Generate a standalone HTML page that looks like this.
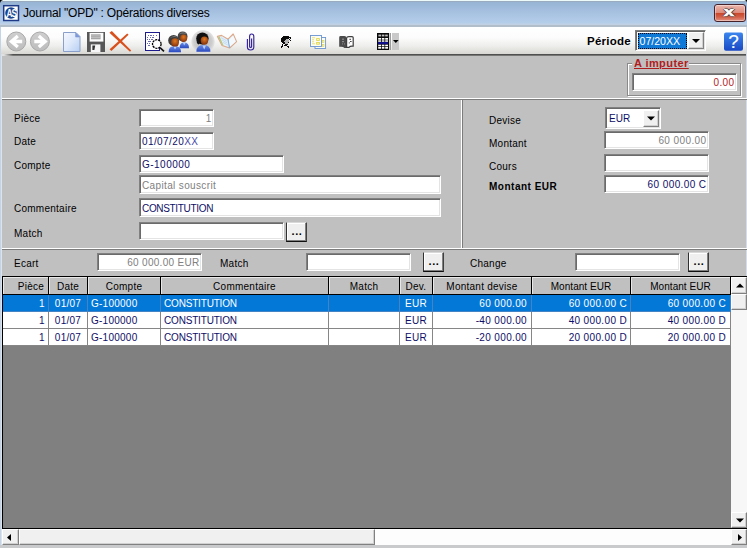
<!DOCTYPE html>
<html lang="fr">
<head>
<meta charset="utf-8">
<title>Journal "OPD" : Opérations diverses</title>
<style>
*{box-sizing:border-box;margin:0;padding:0}
html,body{width:747px;height:548px;overflow:hidden;background:#c0c0c0}
body{position:relative;font-family:"Liberation Sans",Arial,sans-serif;font-size:11px;color:#000}
.abs{position:absolute}
#titlebar{left:0;top:0;width:747px;height:27px;background:linear-gradient(#ecfafa 0,#ecfafa 1px,#9aabc0 1px,#9aabc0 2px,#97b4d4 2px,#a6c0e0 12px,#b4ceea 23px,#c2d0e3 24px,#c2d0e3 25px,#b2bec9 25px,#b2bec9 27px)}
#title{left:23px;top:6px;font-size:12px;line-height:15px;color:#000;white-space:nowrap;letter-spacing:-0.21px}
#toolbar{left:1px;top:27px;width:745px;height:27px;background:linear-gradient(#fff 0,#fcfcfc 40%,#eeeeec 70%,#d8d7d3 100%)}
#tbline{left:1px;top:54px;width:745px;height:2px;background:linear-gradient(to right,#e0e0e0 0,#e0e0e0 3px,rgba(224,224,224,0) 12px),linear-gradient(#505050 0,#505050 1px,#777775 1px,#777775 2px)}
#frameL{left:0;top:27px;width:2px;height:521px;background:linear-gradient(to right,#c4d3e6 0,#c4d3e6 1px,#dbe4ee 1px,#dbe4ee 2px)}
#frameR{left:746px;top:27px;width:1px;height:249px;background:#d6dde6}
#frameB{left:0;top:545px;width:747px;height:3px;background:#c9cacc}
.lbl{position:absolute;font-size:10px;letter-spacing:.25px;line-height:13px;white-space:nowrap;color:#000}
.inp{position:absolute;background:#fff;border:1px solid;border-color:#808080 #fff #fff #808080;box-shadow:inset 1px 1px 0 #6a6a6a, inset -1px -1px 0 #e4e4e4;font-size:10px;letter-spacing:.25px;line-height:13px;padding:2px 3px 0 2px;white-space:nowrap;overflow:hidden;color:#0e0e66;height:18px}
.inp.r{text-align:right;padding-right:1.5px}
.n{letter-spacing:.4px}
.inp.dis{color:#808080}
.btn{position:absolute;background:#efefef;border:1px solid;border-color:#d8d8d8 #404040 #101010 #303030;box-shadow:inset -1px -1px 0 #808080, inset 1px 1px 0 #fff;font-size:11px;font-weight:bold;letter-spacing:.6px;text-align:center;line-height:16px;padding-left:1px}
.hl{position:absolute;height:2px;border-top:1px solid #fff;border-bottom:1px solid #7c7c7c}
.vl{position:absolute;width:2px;border-left:1px solid #fff;border-right:1px solid #7c7c7c}
#grid{left:2px;top:276px;width:745px;height:253px;background:#808080;border:1px solid #000;border-right:none}
.hd{position:absolute;top:0;height:18px;background:#c0c0c0;border-right:1px solid #000;border-bottom:1px solid #000;box-shadow:inset 1px 1px 0 #e8e8e8;text-align:center;font-size:10px;letter-spacing:.25px;line-height:17px;white-space:nowrap;overflow:hidden;padding:1px 0 0 0}
.hd.r{text-align:right;padding-right:4px}
.row{position:absolute;left:0;width:728px;height:17px;background:#fff}
.row.sel{background:#0478d7}
.c{position:absolute;top:0;height:17px;border-right:1px solid #868686;border-bottom:1px solid #868686;font-size:10px;letter-spacing:.25px;line-height:16px;color:#0e0e66;white-space:nowrap;overflow:hidden;padding:1px 3px 0 3px}
.sel .c{color:#fff;border-color:#4584c4}
.c.r{text-align:right;padding-right:4px;letter-spacing:.35px}
.c.m{text-align:center}
.sbtrack{background:#f7f7f7}
.sbb{position:absolute;background:#f0f0f0;border:1px solid;border-color:#fff #808080 #808080 #fff;box-shadow:inset -1px -1px 0 #d0d0d0}
.cap{font-size:10px;letter-spacing:-0.33px}
.c .cap{letter-spacing:-0.18px}
</style>
</head>
<body>
<div id="titlebar" class="abs"></div>
<div id="frameL" class="abs"></div>
<div id="frameR" class="abs"></div>
<div id="frameB" class="abs"></div>
<div id="title" class="abs">Journal "OPD" : Opérations diverses</div>
<div id="toolbar" class="abs"></div>
<div id="tbline" class="abs"></div>
<svg id="tbicons" class="abs" style="left:0;top:27px" width="747" height="28" viewBox="0 27 747 28">
<defs>
<linearGradient id="gdoc" x1="0" y1="0" x2="1" y2="1"><stop offset="0" stop-color="#f6f9ff"/><stop offset="0.5" stop-color="#dde8fa"/><stop offset="1" stop-color="#b6cef2"/></linearGradient>
<radialGradient id="ghalo"><stop offset="0" stop-color="#b4b4b4"/><stop offset="0.75" stop-color="#cecece"/><stop offset="0.92" stop-color="#dcdcdc" stop-opacity="0.8"/><stop offset="1" stop-color="#e8e8e8" stop-opacity="0"/></radialGradient>
<radialGradient id="gface" cx="0.5" cy="0.35" r="0.7"><stop offset="0" stop-color="#e07a20"/><stop offset="1" stop-color="#7a2a0c"/></radialGradient>
<linearGradient id="gbody" x1="0" y1="0" x2="0" y2="1"><stop offset="0" stop-color="#6a8ee8"/><stop offset="1" stop-color="#2a48c0"/></linearGradient>
<linearGradient id="ghelp" x1="0" y1="0" x2="0" y2="1"><stop offset="0" stop-color="#3b86ee"/><stop offset="1" stop-color="#1848c4"/></linearGradient>
<linearGradient id="gcirc" x1="0" y1="0" x2="0" y2="1"><stop offset="0" stop-color="#cfcfcf"/><stop offset="1" stop-color="#bcbcbc"/></linearGradient>
</defs>
<!-- back / forward -->
<circle cx="16.3" cy="41.5" r="9.5" fill="url(#gcirc)" stroke="#a9a9a9" stroke-width="1"/>
<path d="M17.8 35.9 L11.4 41.5 L17.8 47.1 M12.5 41.5 H22.2" fill="none" stroke="#fff" stroke-width="3.3" stroke-linejoin="miter"/>
<circle cx="39.9" cy="41.5" r="9.5" fill="url(#gcirc)" stroke="#a9a9a9" stroke-width="1"/>
<path d="M38.8 35.9 L45.2 41.5 L38.8 47.1 M44 41.5 H34.3" fill="none" stroke="#fff" stroke-width="3.3" stroke-linejoin="miter"/>
<!-- new doc -->
<path d="M63.5 32.5 H76 L80 36.5 V51.5 H63.5 Z" fill="url(#gdoc)" stroke="#8aa0ca" stroke-width="1"/>
<path d="M75.6 32.8 V37 H79.8 Z" fill="#7c9ade" stroke="#7d96cc" stroke-width="0.6"/>
<!-- floppy -->
<rect x="87" y="32" width="18" height="20" fill="#575757"/>
<rect x="89.6" y="32.8" width="13.8" height="8.8" fill="#fcfcfc"/>
<rect x="91" y="34.3" width="9.6" height="5" fill="#a4a4a4"/>
<rect x="91" y="35.6" width="9.6" height="0.6" fill="#cfcfcf"/><rect x="91" y="37.4" width="9.6" height="0.6" fill="#cfcfcf"/>
<rect x="90.8" y="44.4" width="9.6" height="7.6" fill="#f6f6f6"/><path d="M92.4 45.6 H95.2 L94.4 50 H92.4 Z" fill="#333"/>
<!-- red X -->
<path d="M109.4 32.8 L111.8 31 L131.2 50.6 L130 51.8 Z" fill="#d8501c"/>
<path d="M109.6 49.2 L127.2 33.6 L128.6 34.8 L111.4 51 Z" fill="#d8501c"/>
<!-- preview -->
<rect x="145.5" y="32.5" width="14" height="18" fill="#fff" stroke="#1c1a8c" stroke-width="1"/>
<g fill="#6a6ab0"><rect x="148" y="35" width="1" height="1"/><rect x="150" y="35" width="2" height="1"/><rect x="153" y="35" width="1" height="1"/><rect x="156" y="35" width="1" height="1"/>
<rect x="147" y="37" width="1" height="1"/><rect x="150" y="37" width="1" height="1"/><rect x="152" y="37" width="2" height="1"/>
<rect x="147" y="39" width="1" height="1"/><rect x="149" y="39" width="1" height="1"/><rect x="151" y="39" width="2" height="1"/>
<rect x="148" y="41" width="3" height="1"/><rect x="147" y="43" width="1" height="1"/><rect x="149" y="43" width="1" height="1"/><rect x="148" y="45" width="2" height="1"/></g>
<circle cx="156.8" cy="44" r="4.3" fill="#fff" stroke="#000" stroke-width="1.3" stroke-dasharray="2.2 0.8"/>
<path d="M160 47.6 L164 51.4" stroke="#111" stroke-width="1.6"/>
<!-- two people -->
<g>
<path d="M179.6 48.2 Q179.4 42.4 184 42.4 Q189.2 42.4 189 48.2 Z" fill="url(#gbody)"/>
<path d="M183 42.8 L184.2 45.4 L185.6 42.8 Z" fill="#b8d0f8"/>
<ellipse cx="182.6" cy="36.4" rx="4.9" ry="5" fill="#444"/>
<path d="M178.6 34.6 Q182.6 30.4 187 34 Q183 32.6 178.6 34.6 Z" fill="#777"/>
<ellipse cx="183.6" cy="38.2" rx="3.5" ry="3.8" fill="url(#gface)"/>
<path d="M168.6 52.2 Q168.4 46 174.8 46 Q181.2 46 181 52.2 Z" fill="url(#gbody)"/>
<path d="M173.4 46.4 L175 49.6 L176.8 46.4 Z" fill="#b8d0f8"/>
<ellipse cx="173.6" cy="40.4" rx="5.4" ry="5.5" fill="#3c3c3c"/>
<path d="M169.4 38.4 Q173.6 33.8 178.4 37.6 Q174 36.2 169.4 38.4 Z" fill="#777"/>
<ellipse cx="175" cy="42.4" rx="3.9" ry="4.2" fill="url(#gface)"/>
</g>
<!-- person with halo -->
<circle cx="203" cy="41.8" r="12.2" fill="url(#ghalo)"/>
<path d="M196.4 51.8 Q196.2 45 203.4 45 Q210.6 45 210.4 51.8 Z" fill="url(#gbody)"/>
<path d="M202.4 45.6 L204.2 49.4 L206 45.6 Z" fill="#b8d0f8"/>
<ellipse cx="202.4" cy="38.6" rx="6.2" ry="6" fill="#101010"/>
<path d="M197 39 Q196 43.6 198.6 44.6 L201 42 Z" fill="#101010"/>
<ellipse cx="204.4" cy="40.6" rx="3.7" ry="4.2" fill="url(#gface)"/>
<!-- open book -->
<path d="M217.4 36.4 L221.6 35.4 L228 39.2 L233.2 34 L236.6 41.6 L229.6 48 L222 45.6 Z" fill="#e4f0fa" stroke="#dca888" stroke-width="1.1" stroke-linejoin="round"/>
<path d="M228 39.2 L229.6 48" stroke="#86b4dc" stroke-width="1.3"/>
<path d="M229 40 L233.2 35.6 L235.6 41.4 L230.2 46.4 Z" fill="#f4f9fe"/>
<path d="M218 36.8 L219.6 36.4 L223.6 45.6 L222.2 45.2 Z" fill="#b8c880"/>
<path d="M221 37.6 L226.6 40.8 M222 40 L227.2 43 M223 42.4 L227.8 45" stroke="#b8d4ee" stroke-width="0.7"/>
<!-- paperclip -->
<path d="M247.4 39 V47 Q247.4 50 250.6 50 Q253.8 50 253.8 47 V36.6 Q253.8 34 251.6 34 Q249.6 34 249.6 36.6 V46.4 Q249.6 47.4 250.6 47.4 Q251.6 47.4 251.6 46.4 V38.6" fill="none" stroke="#35249a" stroke-width="1.15"/>
<!-- head -->
<g shape-rendering="crispEdges"><rect x="283" y="36" width="6" height="1" fill="#0a0a0a"/><rect x="282" y="37" width="9" height="1" fill="#0a0a0a"/><rect x="281" y="38" width="8" height="1" fill="#0a0a0a"/><rect x="290" y="38" width="1" height="1" fill="#0a0a0a"/><rect x="281" y="39" width="5" height="1" fill="#0a0a0a"/><rect x="286" y="39" width="2" height="1" fill="#b4b4b4"/><rect x="288" y="39" width="1" height="1" fill="#f4f4f4"/><rect x="289" y="39" width="1" height="1" fill="#0a0a0a"/><rect x="281" y="40" width="4" height="1" fill="#0a0a0a"/><rect x="285" y="40" width="4" height="1" fill="#b4b4b4"/><rect x="290" y="40" width="1" height="1" fill="#0a0a0a"/><rect x="281" y="41" width="3" height="1" fill="#0a0a0a"/><rect x="284" y="41" width="5" height="1" fill="#b4b4b4"/><rect x="289" y="41" width="1" height="1" fill="#f4f4f4"/><rect x="282" y="42" width="3" height="1" fill="#0a0a0a"/><rect x="285" y="42" width="3" height="1" fill="#b4b4b4"/><rect x="288" y="42" width="1" height="1" fill="#0a0a0a"/><rect x="283" y="43" width="2" height="1" fill="#0a0a0a"/><rect x="285" y="43" width="3" height="1" fill="#b4b4b4"/><rect x="288" y="43" width="1" height="1" fill="#f4f4f4"/><rect x="282" y="44" width="1" height="1" fill="#0a0a0a"/><rect x="284" y="44" width="1" height="1" fill="#f4f4f4"/><rect x="285" y="44" width="3" height="1" fill="#0a0a0a"/><rect x="282" y="45" width="1" height="1" fill="#0a0a0a"/><rect x="284" y="45" width="3" height="1" fill="#0a0a0a"/><rect x="287" y="45" width="1" height="1" fill="#f4f4f4"/><rect x="281" y="46" width="2" height="1" fill="#0a0a0a"/><rect x="287" y="46" width="2" height="1" fill="#0a0a0a"/><rect x="281" y="47" width="1" height="1" fill="#0a0a0a"/><rect x="288" y="47" width="1" height="1" fill="#0a0a0a"/></g>
<!-- docs -->
<rect x="315" y="37.5" width="10.6" height="11" fill="#fcfdf0" stroke="#6a94d2" stroke-width="0.9"/>
<rect x="322.6" y="40.4" width="1.4" height="2" fill="#fdfbd0" stroke="#e2d858" stroke-width="0.7"/><rect x="322.6" y="44.4" width="1.4" height="2" fill="#fdfbd0" stroke="#e2d858" stroke-width="0.7"/>
<rect x="310.5" y="35.5" width="11" height="11" fill="#fcfdf0" stroke="#6a94d2" stroke-width="0.9"/>
<g stroke="#ded448" stroke-width="0.8" fill="#fbf8c4"><rect x="316.6" y="38.6" width="2.8" height="1.8"/><rect x="316.6" y="42.4" width="2.8" height="1.8"/></g>
<g fill="#e6dc60"><rect x="312" y="37.4" width="3" height="0.8"/><rect x="312" y="39.4" width="2" height="0.8"/><rect x="312" y="41.4" width="2" height="0.8"/><rect x="312" y="43.4" width="3" height="0.8"/></g>
<!-- dark book -->
<path d="M339.2 37.4 Q339.2 36 340.6 36 H344.4 Q346.4 36.2 346.6 38 V48 H344.4 Q343.4 46.8 341 46.8 H339.2 Z" fill="#4a4a4a"/>
<path d="M346.6 38 Q346.8 36.6 348.8 36.6 H352 Q353.2 36.6 353.2 37.8 V46.2 H352 Q350 46.2 349 47.4 H346.6 Z" fill="#fdfdfd" stroke="#3e3e3e" stroke-width="1.2"/>
<g fill="#8c8c8c"><rect x="342" y="38.6" width="2" height="1.2"/><rect x="342" y="41" width="2" height="1.2"/><rect x="342" y="43.4" width="1" height="1"/><rect x="344" y="43.4" width="1" height="1"/></g>
<g fill="#444"><rect x="349.4" y="38.8" width="1.6" height="1"/><rect x="350" y="41" width="1.6" height="1"/><rect x="348.8" y="42.4" width="1" height="1"/></g>
<!-- grid icon -->
<rect x="377" y="33" width="12" height="17" fill="#0a0a0a"/>
<g fill="#bdbdbd"><rect x="378.4" y="34.6" width="2.6" height="1.8"/><rect x="381.8" y="34.6" width="2.6" height="1.8"/><rect x="385.2" y="34.6" width="2.6" height="1.8"/></g>
<g fill="#fff"><rect x="378.2" y="38" width="2.8" height="1.7"/><rect x="381.8" y="38" width="2.6" height="1.7"/><rect x="385.2" y="38" width="2.8" height="1.7"/>
<rect x="378.2" y="40.3" width="2.8" height="1.5"/><rect x="381.8" y="40.3" width="2.6" height="1.5"/><rect x="385.2" y="40.3" width="2.8" height="1.5"/>
<rect x="378.2" y="44.6" width="2.8" height="1.7"/><rect x="381.8" y="44.6" width="2.6" height="1.7"/><rect x="385.2" y="44.6" width="2.8" height="1.7"/>
<rect x="378.2" y="47" width="2.8" height="1.7"/><rect x="381.8" y="47" width="2.6" height="1.7"/><rect x="385.2" y="47" width="2.8" height="1.7"/></g>
<rect x="378" y="42" width="10" height="2.2" fill="#10108a"/>
<rect x="389.6" y="33" width="1.4" height="17" fill="#9c9c9c"/>
<rect x="392" y="33" width="7" height="17" fill="#c9c9c9"/>
<path d="M393 40 H398.6 L395.8 43 Z" fill="#000"/>
<!-- help -->
<rect x="724" y="32.4" width="19" height="18.4" rx="2" fill="url(#ghelp)"/>
</svg>

<svg class="abs" style="left:0;top:0" width="30" height="27" viewBox="0 0 30 27">
<path d="M0 0 H3 Q0.5 0.5 0 3 Z" fill="#000"/>
<rect x="3.7" y="5.7" width="14.8" height="14.8" fill="#fff" stroke="#1f3a86" stroke-width="1.5"/>
<circle cx="11" cy="13" r="5.8" fill="#1a4490"/>
<text x="11.4" y="16.6" font-family="Liberation Sans, Arial, sans-serif" font-size="10.2" font-weight="bold" fill="#fff" text-anchor="middle" letter-spacing="-1.2" transform="translate(11 0) scale(0.8 1) translate(-11 0)">AS</text>
</svg>
<!-- close button -->
<div class="abs" style="left:714px;top:4px;width:32px;height:18px;border:1px solid #45222a;border-radius:3px;background:linear-gradient(#ecb8ae 0,#de8c7c 47%,#c8482c 52%,#d26048 75%,#e29484 100%);box-shadow:inset 0 0 0 1px rgba(255,255,255,.4)"></div>
<div class="abs" style="left:713px;top:5px;width:32px;height:18px;text-align:center;font-size:13.5px;line-height:14px;font-weight:bold;color:#fff;-webkit-text-stroke:0.55px #fff;text-shadow:1px 0 0 #4a3434,-1px 0 0 #4a3434,0 1px 0 #4a3434,0 -1px 0 #4a3434,0 0 2px #4a3434;transform:scaleX(1.38)">x</div>
<svg class="abs" style="left:743px;top:0" width="4" height="4"><path d="M4 0 H1.5 Q3.6 0.4 4 2.5 Z" fill="#000"/></svg>
<!-- periode -->
<div class="lbl" style="left:587px;top:34px;font-weight:bold;font-size:11.5px;line-height:14px">Période</div>
<div class="inp" style="left:635px;top:30px;width:71px;height:21px;padding:0"></div>
<div class="abs" style="left:638px;top:33px;width:49px;height:16px;background:#0f79d7;outline:1px dotted #000;outline-offset:-1px;color:#fff;font-size:10.6px;line-height:13px;padding:2px 0 0 1.5px;white-space:nowrap">07/20XX</div>
<div class="sbb" style="left:688px;top:32px;width:16px;height:17px"></div>
<svg class="abs" style="left:688px;top:32px" width="16" height="17"><path d="M4 6.9 H12 L8 11 Z" fill="#000"/></svg>
<div class="abs" style="left:724px;top:32px;width:19px;height:19px;text-align:center;font-size:19px;line-height:19px;color:#fff;-webkit-text-stroke:0.15px #fff">?</div>

<!-- form -->
<div class="hl" style="left:2px;top:98px;width:745px"></div>
<div class="hl" style="left:2px;top:248px;width:745px"></div>
<div class="vl" style="left:461px;top:100px;height:148px"></div>

<div class="lbl" style="left:14px;top:112px">Pièce</div>
<div class="lbl" style="left:14px;top:135px">Date</div>
<div class="lbl" style="left:14px;top:159px">Compte</div>
<div class="lbl" style="left:14px;top:202px">Commentaire</div>
<div class="lbl" style="left:14px;top:227px">Match</div>

<div class="inp r dis" style="left:139px;top:109px;width:75px">1</div>
<div class="inp n" style="left:139px;top:132px;width:75px">01/07/20<span style="color:#4848a8">XX</span></div>
<div class="inp" style="left:139px;top:155px;width:145px;letter-spacing:.48px">G-100000</div>
<div class="inp dis" style="left:139px;top:175px;width:302px;height:19px;padding-top:3px;letter-spacing:.36px">Capital souscrit</div>
<div class="inp" style="left:139px;top:198px;width:302px;height:19px;padding-top:3px"><span class="cap">CONSTITUTION</span></div>
<div class="inp" style="left:139px;top:222px;width:145px"></div>
<div class="btn" style="left:286px;top:222px;width:21px;height:20px">...</div>

<div class="lbl" style="left:489px;top:114px">Devise</div>
<div class="lbl" style="left:489px;top:137px">Montant</div>
<div class="lbl" style="left:489px;top:160px">Cours</div>
<div class="lbl" style="left:489px;top:180px;font-weight:bold;letter-spacing:.5px">Montant EUR</div>

<div class="inp" style="left:605px;top:107px;width:56px;height:22px;padding:4px 0 0 3px;letter-spacing:0">EUR</div>
<div class="sbb" style="left:643px;top:110px;width:16px;height:17px"></div>
<svg class="abs" style="left:643px;top:110px" width="16" height="17"><path d="M4 6.4 H12 L8 10.5 Z" fill="#000"/></svg>
<div class="inp r dis n" style="left:604px;top:131px;width:105px">60 000.00</div>
<div class="inp" style="left:604px;top:154px;width:105px"></div>
<div class="inp r n" style="left:604px;top:175px;width:105px">60 000.00 C</div>

<!-- A imputer -->
<div class="abs" style="left:627px;top:63px;width:114px;height:33px;border:1px solid #8a8a8a;box-shadow:inset 1px 1px 0 #fff,1px 1px 0 #fff"></div>
<div class="lbl" style="left:632px;top:57px;background:#c0c0c0;padding:0 0 0 2px;font-weight:bold;color:#b01c1c;text-decoration:underline;font-size:11px;letter-spacing:.42px">A imputer</div>
<div class="inp r n" style="left:632px;top:73px;width:105px;color:#b41c1c">0.00</div>

<!-- ecart row -->
<div class="lbl" style="left:14px;top:257px">Ecart</div>
<div class="inp r dis" style="left:97px;top:253px;width:105px;letter-spacing:.3px">60 000.00 EUR</div>
<div class="lbl" style="left:220px;top:257px">Match</div>
<div class="inp" style="left:306px;top:253px;width:105px"></div>
<div class="btn" style="left:423px;top:252px;width:21px;height:20px">...</div>
<div class="lbl" style="left:470px;top:257px">Change</div>
<div class="inp" style="left:575px;top:253px;width:105px"></div>
<div class="btn" style="left:688px;top:252px;width:21px;height:20px">...</div>

<!-- data grid -->
<div id="grid" class="abs">
<div class="hd r" style="left:0px;width:46px">Pièce</div>
<div class="hd" style="left:46px;width:39px">Date</div>
<div class="hd" style="left:85px;width:73px">Compte</div>
<div class="hd" style="left:158px;width:168px">Commentaire</div>
<div class="hd" style="left:326px;width:71px">Match</div>
<div class="hd" style="left:397px;width:33px">Dev.</div>
<div class="hd" style="left:430px;width:99px">Montant devise</div>
<div class="hd" style="left:529px;width:99px"><span style="letter-spacing:.05px">Montant EUR</span></div>
<div class="hd" style="left:628px;width:100px"><span style="letter-spacing:.05px">Montant EUR</span></div>
<div class="row sel" style="top:18px">
<div class="c r" style="left:0px;width:46px;padding-right:3px">1</div><div class="c m" style="left:46px;width:39px">01/07</div><div class="c l" style="left:85px;width:73px">G-100000</div><div class="c l" style="left:158px;width:168px"><span class="cap">CONSTITUTION</span></div><div class="c l" style="left:326px;width:71px"></div><div class="c m" style="left:397px;width:33px">EUR</div><div class="c r" style="left:430px;width:99px">60 000.00</div><div class="c r" style="left:529px;width:99px;padding-right:3px">60 000.00 C</div><div class="c r" style="left:628px;width:100px">60 000.00 C</div>
</div>
<div class="row" style="top:35px">
<div class="c r" style="left:0px;width:46px;padding-right:3px">1</div><div class="c m" style="left:46px;width:39px">01/07</div><div class="c l" style="left:85px;width:73px">G-100000</div><div class="c l" style="left:158px;width:168px"><span class="cap">CONSTITUTION</span></div><div class="c l" style="left:326px;width:71px"></div><div class="c m" style="left:397px;width:33px">EUR</div><div class="c r" style="left:430px;width:99px">-40 000.00</div><div class="c r" style="left:529px;width:99px;padding-right:3px">40 000.00 D</div><div class="c r" style="left:628px;width:100px">40 000.00 D</div>
</div>
<div class="row" style="top:52px">
<div class="c r" style="left:0px;width:46px;padding-right:3px">1</div><div class="c m" style="left:46px;width:39px">01/07</div><div class="c l" style="left:85px;width:73px">G-100000</div><div class="c l" style="left:158px;width:168px"><span class="cap">CONSTITUTION</span></div><div class="c l" style="left:326px;width:71px"></div><div class="c m" style="left:397px;width:33px">EUR</div><div class="c r" style="left:430px;width:99px">-20 000.00</div><div class="c r" style="left:529px;width:99px;padding-right:3px">20 000.00 D</div><div class="c r" style="left:628px;width:100px">20 000.00 D</div>
</div>
<div class="abs sbtrack" style="left:728px;top:0;width:16px;height:251px"></div>
<div class="sbb" style="left:728px;top:0;width:16px;height:17px"></div>
<svg class="abs" style="left:728px;top:0" width="16" height="17"><path d="M5 10.5 H13 L9 6.5 Z" fill="#000"/></svg>
<div class="sbb" style="left:728px;top:17px;width:16px;height:16px"></div>
<div class="sbb" style="left:728px;top:235px;width:16px;height:16px"></div>
<svg class="abs" style="left:728px;top:235px" width="16" height="16"><path d="M5 6.5 H13 L9 10.5 Z" fill="#000"/></svg>
</div>
<!-- horizontal scrollbar -->
<div class="abs sbtrack" style="left:2px;top:529px;width:745px;height:16px;background:#fdfdfd"></div>
<div class="sbb" style="left:2px;top:529px;width:17px;height:16px"></div>
<svg class="abs" style="left:2px;top:529px" width="17" height="16"><path d="M9 5 V12 L5 8.5 Z" fill="#000"/></svg>
<div class="sbb" style="left:19px;top:529px;width:356px;height:16px"></div>
<div class="sbb" style="left:731px;top:529px;width:16px;height:16px"></div>
<svg class="abs" style="left:731px;top:529px" width="16" height="16"><path d="M7 5 V12 L11 8.5 Z" fill="#000"/></svg>
</body>
</html>
